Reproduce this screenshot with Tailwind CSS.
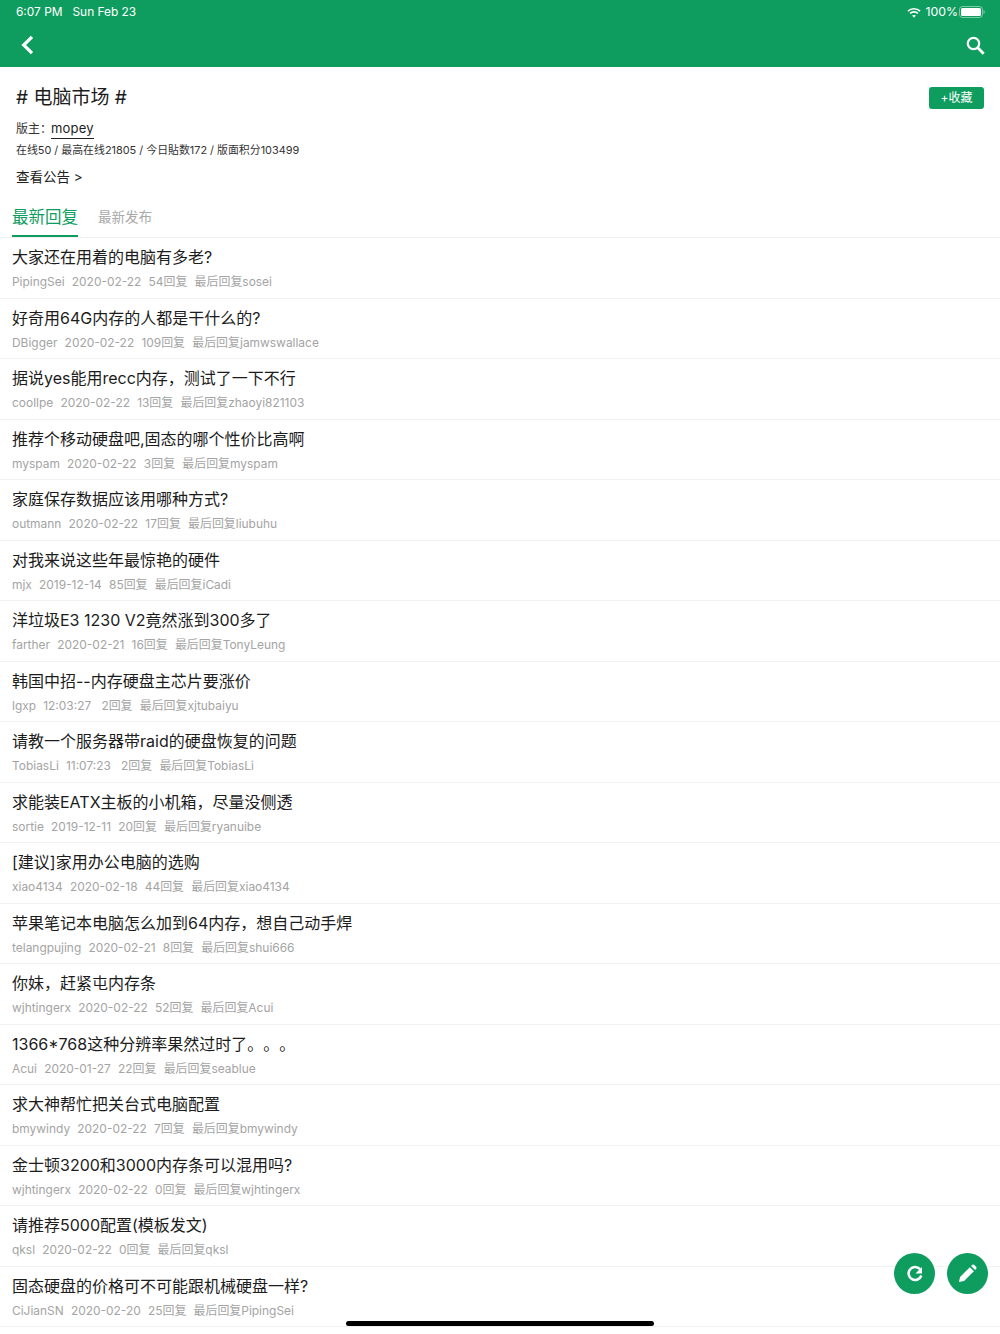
<!DOCTYPE html>
<html lang="zh-CN"><head><meta charset="utf-8"><script src="https://cdn.jsdelivr.net/npm/@tailwindcss/browser@4"></script></head>
<body class="bg-white font-['Inter','Noto_Sans_CJK_SC',sans-serif] text-[#1c1c1c] [text-spacing-trim:space-all]">
<div class="relative w-[1000px] h-[1334px] overflow-hidden">
<header class="h-[67px] bg-[#0f9d5f] text-white flex flex-col">
  <div class="h-[24px] flex items-center justify-between pl-4 pr-[15px] text-[12px]">
    <div class="flex gap-[10px]"><span class="text-[11.900px]">6:07 PM</span><span class="text-[11.900px]">Sun Feb 23</span></div>
    <div class="flex items-center">
      <svg class="mr-[4px]" width="14" height="11" viewBox="0 0 15 11" fill="none" stroke="white" stroke-width="1.700"><path d="M1 4 C4.500 .6 10.500 .6 14 4"/><path d="M3.400 6.400 C5.600 4.300 9.400 4.300 11.600 6.400"/><path d="M7.500 11 L5.400 8.800 C6.600 7.800 8.400 7.800 9.600 8.800Z" fill="white" stroke="none"/></svg>
      <span class="text-[12.300px] mr-[1px]">100%</span>
      <svg width="26" height="12" viewBox="0 0 26 12" fill="none"><rect x=".5" y=".5" width="23" height="11" rx="3" stroke="white" stroke-opacity=".45"/><rect x="2" y="2" width="20" height="8" rx="1.500" fill="white"/><path d="M24.600 4v4c.7-.2 1.100-1 1.100-2s-.4-1.800-1.100-2z" fill="white" fill-opacity=".5"/></svg>
    </div>
  </div>
  <div class="flex-1 flex items-center justify-between pl-[20px] pr-[15px] pb-[1px]">
    <svg width="14" height="20" viewBox="0 0 14 20" fill="none" stroke="white" stroke-width="3.200"><path d="M12 1.800 L3.700 10 L12 18.200"/></svg>
    <svg width="19" height="19" viewBox="0 0 19 19" fill="none" stroke="white"><circle cx="7.500" cy="7.500" r="5.700" stroke-width="2.200"/><path d="M11.800 11.800 L17.700 17.700" stroke-width="2.800"/></svg>
  </div>
</header>
<section class="relative h-[138px] px-4 pt-[19px]">
  <h1 class="text-[19px] leading-[24px]"># 电脑市场 #</h1>
  <div class="mt-[9px] h-[20px] flex items-center text-[12px] text-[#333]"><span class="mr-[-1px]">版主：</span><span class="text-[#1c1c1c] text-[13px] leading-[19px] border-b border-[#222] tracking-[.2px]">mopey</span></div>
  <p class="mt-[3px] text-[10.900px] leading-[16px] text-[#333]">在线50 / 最高在线21805 / 今日貼数172 / 版面积分103499</p>
  <p class="mt-[9px] text-[13.500px] leading-[20px] text-[#222]">查看公告 &gt;</p>
  <button class="absolute right-4 top-[20px] w-[55px] h-[22px] rounded-[3px] bg-[#0f9d5f] text-white text-[12px]">+收藏</button>
  <div class="absolute left-3 bottom-[-32px] flex items-start gap-[20px]">
    <div class="w-[66px] h-[33px] border-b-2 border-[#0f9d5f] text-[#0f9d5f] text-[16.500px] leading-[22px] pt-[2px] whitespace-nowrap">最新回复</div>
    <div class="text-[#a8a8a8] text-[13.500px] leading-[22px] pt-[2px]">最新发布</div>
  </div>
</section>
<div class="h-[33px] border-b border-[#f0f0f0]"></div>
<main class="text-[#1c1c1c]">
  <article class="h-[60.530px] border-b border-[#f1f1f1] pl-3 pt-[8px]"><h2 class="text-[16px] leading-[22px]">大家还在用着的电脑有多老?</h2><p class="mt-[5px] text-[11.950px] leading-[18px] text-[#a4a4a4] flex gap-[7.200px]"><span>PipingSei</span><span>2020-02-22</span><span>54回复</span><span>最后回复sosei</span></p></article>
  <article class="h-[60.530px] border-b border-[#f1f1f1] pl-3 pt-[8px]"><h2 class="text-[16px] leading-[22px]">好奇用64G内存的人都是干什么的?</h2><p class="mt-[5px] text-[11.950px] leading-[18px] text-[#a4a4a4] flex gap-[7.200px]"><span>DBigger</span><span>2020-02-22</span><span>109回复</span><span>最后回复jamwswallace</span></p></article>
  <article class="h-[60.530px] border-b border-[#f1f1f1] pl-3 pt-[8px]"><h2 class="text-[16px] leading-[22px]">据说yes能用recc内存，测试了一下不行</h2><p class="mt-[5px] text-[11.950px] leading-[18px] text-[#a4a4a4] flex gap-[7.200px]"><span>coollpe</span><span>2020-02-22</span><span>13回复</span><span>最后回复zhaoyi821103</span></p></article>
  <article class="h-[60.530px] border-b border-[#f1f1f1] pl-3 pt-[8px]"><h2 class="text-[16px] leading-[22px]">推荐个移动硬盘吧,固态的哪个性价比高啊</h2><p class="mt-[5px] text-[11.950px] leading-[18px] text-[#a4a4a4] flex gap-[7.200px]"><span>myspam</span><span>2020-02-22</span><span>3回复</span><span>最后回复myspam</span></p></article>
  <article class="h-[60.530px] border-b border-[#f1f1f1] pl-3 pt-[8px]"><h2 class="text-[16px] leading-[22px]">家庭保存数据应该用哪种方式?</h2><p class="mt-[5px] text-[11.950px] leading-[18px] text-[#a4a4a4] flex gap-[7.200px]"><span>outmann</span><span>2020-02-22</span><span>17回复</span><span>最后回复liubuhu</span></p></article>
  <article class="h-[60.530px] border-b border-[#f1f1f1] pl-3 pt-[8px]"><h2 class="text-[16px] leading-[22px]">对我来说这些年最惊艳的硬件</h2><p class="mt-[5px] text-[11.950px] leading-[18px] text-[#a4a4a4] flex gap-[7.200px]"><span>mjx</span><span>2019-12-14</span><span>85回复</span><span>最后回复iCadi</span></p></article>
  <article class="h-[60.530px] border-b border-[#f1f1f1] pl-3 pt-[8px]"><h2 class="text-[16px] leading-[22px]">洋垃圾E3 1230 V2竟然涨到300多了</h2><p class="mt-[5px] text-[11.950px] leading-[18px] text-[#a4a4a4] flex gap-[7.200px]"><span>farther</span><span>2020-02-21</span><span>16回复</span><span>最后回复TonyLeung</span></p></article>
  <article class="h-[60.530px] border-b border-[#f1f1f1] pl-3 pt-[8px]"><h2 class="text-[16px] leading-[22px]">韩国中招--内存硬盘主芯片要涨价</h2><p class="mt-[5px] text-[11.950px] leading-[18px] text-[#a4a4a4] flex gap-[7.200px]"><span>lgxp</span><span>12:03:27</span><span class="ml-[3px]">2回复</span><span>最后回复xjtubaiyu</span></p></article>
  <article class="h-[60.530px] border-b border-[#f1f1f1] pl-3 pt-[8px]"><h2 class="text-[16px] leading-[22px]">请教一个服务器带raid的硬盘恢复的问题</h2><p class="mt-[5px] text-[11.950px] leading-[18px] text-[#a4a4a4] flex gap-[7.200px]"><span>TobiasLi</span><span>11:07:23</span><span class="ml-[3px]">2回复</span><span>最后回复TobiasLi</span></p></article>
  <article class="h-[60.530px] border-b border-[#f1f1f1] pl-3 pt-[8px]"><h2 class="text-[16px] leading-[22px]">求能装EATX主板的小机箱，尽量没侧透</h2><p class="mt-[5px] text-[11.950px] leading-[18px] text-[#a4a4a4] flex gap-[7.200px]"><span>sortie</span><span>2019-12-11</span><span>20回复</span><span>最后回复ryanuibe</span></p></article>
  <article class="h-[60.530px] border-b border-[#f1f1f1] pl-3 pt-[8px]"><h2 class="text-[16px] leading-[22px]">[建议]家用办公电脑的选购</h2><p class="mt-[5px] text-[11.950px] leading-[18px] text-[#a4a4a4] flex gap-[7.200px]"><span>xiao4134</span><span>2020-02-18</span><span>44回复</span><span>最后回复xiao4134</span></p></article>
  <article class="h-[60.530px] border-b border-[#f1f1f1] pl-3 pt-[8px]"><h2 class="text-[16px] leading-[22px]">苹果笔记本电脑怎么加到64内存，想自己动手焊</h2><p class="mt-[5px] text-[11.950px] leading-[18px] text-[#a4a4a4] flex gap-[7.200px]"><span>telangpujing</span><span>2020-02-21</span><span>8回复</span><span>最后回复shui666</span></p></article>
  <article class="h-[60.530px] border-b border-[#f1f1f1] pl-3 pt-[8px]"><h2 class="text-[16px] leading-[22px]">你妹，赶紧屯内存条</h2><p class="mt-[5px] text-[11.950px] leading-[18px] text-[#a4a4a4] flex gap-[7.200px]"><span>wjhtingerx</span><span>2020-02-22</span><span>52回复</span><span>最后回复Acui</span></p></article>
  <article class="h-[60.530px] border-b border-[#f1f1f1] pl-3 pt-[8px]"><h2 class="text-[16px] leading-[22px]">1366*768这种分辨率果然过时了。。。</h2><p class="mt-[5px] text-[11.950px] leading-[18px] text-[#a4a4a4] flex gap-[7.200px]"><span>Acui</span><span>2020-01-27</span><span>22回复</span><span>最后回复seablue</span></p></article>
  <article class="h-[60.530px] border-b border-[#f1f1f1] pl-3 pt-[8px]"><h2 class="text-[16px] leading-[22px]">求大神帮忙把关台式电脑配置</h2><p class="mt-[5px] text-[11.950px] leading-[18px] text-[#a4a4a4] flex gap-[7.200px]"><span>bmywindy</span><span>2020-02-22</span><span>7回复</span><span>最后回复bmywindy</span></p></article>
  <article class="h-[60.530px] border-b border-[#f1f1f1] pl-3 pt-[8px]"><h2 class="text-[16px] leading-[22px]">金士顿3200和3000内存条可以混用吗?</h2><p class="mt-[5px] text-[11.950px] leading-[18px] text-[#a4a4a4] flex gap-[7.200px]"><span>wjhtingerx</span><span>2020-02-22</span><span>0回复</span><span>最后回复wjhtingerx</span></p></article>
  <article class="h-[60.530px] border-b border-[#f1f1f1] pl-3 pt-[8px]"><h2 class="text-[16px] leading-[22px]">请推荐5000配置(模板发文)</h2><p class="mt-[5px] text-[11.950px] leading-[18px] text-[#a4a4a4] flex gap-[7.200px]"><span>qksl</span><span>2020-02-22</span><span>0回复</span><span>最后回复qksl</span></p></article>
  <article class="h-[60.530px] border-b border-[#f1f1f1] pl-3 pt-[8px]"><h2 class="text-[16px] leading-[22px]">固态硬盘的价格可不可能跟机械硬盘一样?</h2><p class="mt-[5px] text-[11.950px] leading-[18px] text-[#a4a4a4] flex gap-[7.200px]"><span>CiJianSN</span><span>2020-02-20</span><span>25回复</span><span>最后回复PipingSei</span></p></article>
</main>
<button class="absolute left-[894px] top-[1253px] w-[41px] h-[41px] rounded-full bg-[#0f9d5f] flex items-center justify-center">
  <svg width="20" height="20" viewBox="0 0 20 20" fill="none"><path d="M15 5.200 A6.500 6.500 0 1 0 16.300 11.500" stroke="white" stroke-width="2.500"/><path d="M17 3 V9.500 H10.500 Z" fill="white"/></svg>
</button>
<button class="absolute left-[947px] top-[1253px] w-[41px] h-[41px] rounded-full bg-[#0f9d5f] flex items-center justify-center">
  <svg width="19" height="19" viewBox="0 0 20 20" fill="white"><path d="M1 19 L2.200 13.600 L12.500 3.300 L16.700 7.500 L6.400 17.800 Z"/><path d="M13.800 2 L15.100 .8 Q16 .1 16.900 .8 L19.200 3.100 Q19.900 4 19.200 4.900 L18 6.200 Z"/></svg>
</button>
<div class="absolute left-[346px] top-[1321px] w-[308px] h-[5px] rounded-full bg-black"></div>
</div>
</body></html>
